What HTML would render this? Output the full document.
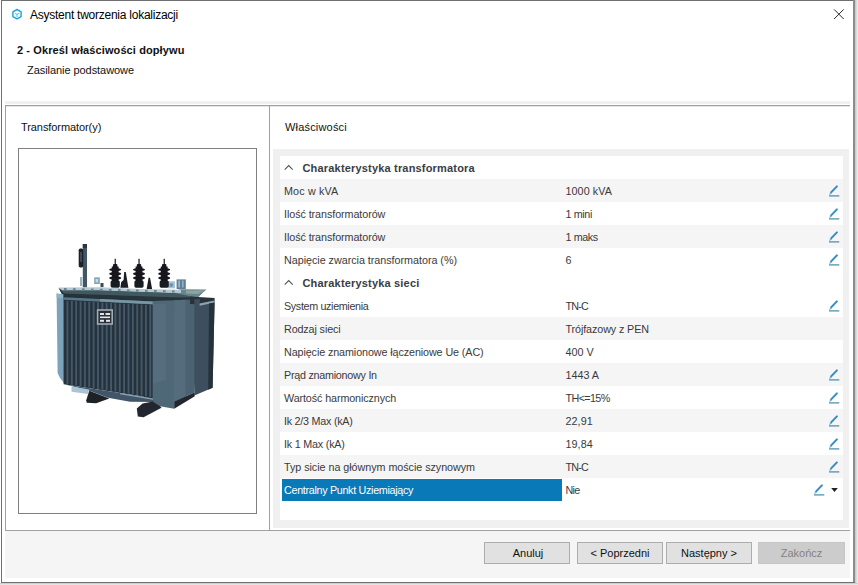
<!DOCTYPE html>
<html>
<head>
<meta charset="utf-8">
<title>Asystent tworzenia lokalizacji</title>
<style>
html,body{margin:0;padding:0;}
body{width:858px;height:585px;position:relative;overflow:hidden;background:#fff;font-family:"Liberation Sans",sans-serif;font-size:11px;color:#1e1e1e;}
.abs{position:absolute;}
.t{position:absolute;white-space:nowrap;line-height:14px;height:14px;}
.row{position:absolute;left:280px;width:563px;height:23px;}
.row.g{background:#f5f5f5;}
.row .l{position:absolute;left:4px;top:5px;line-height:14px;white-space:nowrap;color:#3a3a3a;font-size:10.75px;}
.row .v{position:absolute;left:285.5px;top:5px;line-height:14px;white-space:nowrap;color:#3a3a3a;font-size:10.75px;}
.row .h{position:absolute;left:22.5px;top:5px;line-height:14px;white-space:nowrap;font-weight:bold;color:#3a3d42;letter-spacing:0.18px;}
.row svg.p{position:absolute;left:547px;top:5px;}
.row svg.c{position:absolute;left:4px;top:8px;}
.btn{position:absolute;top:542px;height:20px;border:1px solid #adadad;background:#e1e1e1;text-align:center;line-height:20px;color:#111;box-sizing:content-box;}
</style>
</head>
<body>
<!-- window frame -->
<div class="abs" style="left:1px;top:0;width:853px;height:1px;background:#707070;"></div>
<div class="abs" style="left:1px;top:0;width:1px;height:583px;background:#707070;"></div>
<div class="abs" style="left:853px;top:0;width:2px;height:583px;background:#8c8c8c;"></div>
<div class="abs" style="left:855px;top:0;width:3px;height:585px;background:linear-gradient(90deg,#c4c4c4,#f2f2f2);"></div>
<div class="abs" style="left:1px;top:582px;width:854px;height:1px;background:#707070;"></div>
<div class="abs" style="left:0px;top:583px;width:858px;height:2px;background:linear-gradient(180deg,#c4c4c4,#efefef);"></div>

<!-- title bar -->
<svg class="abs" style="left:10px;top:7px;" width="14" height="15" viewBox="0 0 14 15">
  <path d="M7 2.5 L11.1 4.85 L11.1 9.55 L7 11.9 L2.9 9.55 L2.9 4.85 Z" fill="none" stroke="#1aa7e2" stroke-width="1.45" stroke-linejoin="round"/>
  <path d="M5.2 6.2 L7 7.4 L8.8 6.2 M7 7.4 L7 9.8" fill="none" stroke="#45b8ea" stroke-width="0.9" stroke-linecap="round"/>
</svg>
<div class="t" id="title" style="left:30px;top:8.4px;font-size:12px;color:#000;letter-spacing:-0.25px;">Asystent tworzenia lokalizacji</div>
<svg class="abs" style="left:833px;top:8px;" width="12" height="13" viewBox="0 0 12 13">
  <path d="M1.1 1.4 L10.7 11 M10.7 1.4 L1.1 11" stroke="#2a2a2a" stroke-width="1" fill="none"/>
</svg>

<!-- step header -->
<div class="t" id="h1" style="left:17px;top:43px;font-weight:bold;color:#111;letter-spacing:0.1px;">2 - Określ właściwości dopływu</div>
<div class="t" id="h2" style="left:27px;top:62.5px;color:#111;letter-spacing:-0.06px;">Zasilanie podstawowe</div>

<!-- separator -->
<div class="abs" style="left:5px;top:101px;width:845px;height:3px;background:#f1f1f1;"></div>
<div class="abs" style="left:5px;top:105px;width:845px;height:1px;background:#a0a0a0;"></div>
<div class="abs" style="left:6px;top:106px;width:844px;height:1px;background:#e6e6e6;"></div>
<div class="abs" style="left:5px;top:105px;width:1px;height:426px;background:#a0a0a0;"></div>
<div class="abs" style="left:269px;top:105px;width:1px;height:426px;background:#a0a0a0;"></div>

<!-- left panel -->
<div class="t" id="lp" style="left:21px;top:120px;color:#111;letter-spacing:-0.08px;">Transformator(y)</div>
<div class="abs" style="left:18px;top:148px;width:237px;height:364px;border:1px solid #7f7f7f;background:#fff;"></div>

<!-- TRANSFORMER START -->
<svg class="abs" style="left:19px;top:149px;" width="237" height="364" viewBox="19 149 237 364">
<defs><filter id="bl" x="-5%" y="-5%" width="110%" height="110%"><feGaussianBlur stdDeviation="0.45"/></filter>
<linearGradient id="side" x1="0" x2="1" y1="0" y2="0"><stop offset="0" stop-color="#5b7483"/><stop offset="0.45" stop-color="#56707f"/><stop offset="0.5" stop-color="#4a6070"/><stop offset="1" stop-color="#4d6575"/></linearGradient>
<linearGradient id="finv" x1="0" x2="0" y1="0" y2="1"><stop offset="0" stop-color="#2b3942"/><stop offset="1" stop-color="#313f4a"/></linearGradient>
</defs>
<g filter="url(#bl)">
<rect x="82.8" y="244" width="4.2" height="43.5" fill="#435668"/><rect x="82.8" y="244" width="4.2" height="4" fill="#2b3641"/>
<rect x="78.7" y="248.6" width="4.6" height="18.8" rx="1.6" fill="#1b2129"/>
<rect x="80.3" y="252" width="1.4" height="10" fill="#4a5a68"/>
<rect x="80" y="277" width="2.2" height="9" fill="#9ab4c2"/>
<rect x="94.2" y="277.4" width="5.6" height="6.6" fill="#7fa3b8"/><rect x="95.6" y="279" width="2.6" height="3.4" fill="#c4dae6"/>
<rect x="100.5" y="283" width="3" height="4" fill="#3b4a52"/>
<rect x="167.8" y="281.3" width="7.2" height="7" fill="#a3c4da"/><circle cx="171.3" cy="285" r="1.9" fill="#6f93aa"/>
<rect x="176.6" y="279.4" width="9.2" height="9.6" fill="#5f8096"/><rect x="178.4" y="280.5" width="1.4" height="7" fill="#a8c4d4"/><rect x="182" y="280.5" width="1.6" height="7" fill="#94b2c4"/>
<rect x="114.60000000000001" y="258.8" width="1.3" height="6" fill="#23272e"/><rect x="113.0" y="264" width="4.4" height="3.4" rx="1" fill="#16191f"/><rect x="111.8" y="266.5" width="6.8" height="21" fill="#15181e"/><ellipse cx="115.2" cy="269.6" rx="6" ry="1.7" fill="#14171c"/><ellipse cx="115.2" cy="273.8" rx="6" ry="1.7" fill="#14171c"/><ellipse cx="115.2" cy="278" rx="6" ry="1.7" fill="#14171c"/><rect x="110.60000000000001" y="280.5" width="9.2" height="7" rx="1.5" fill="#171b21"/>
<rect x="138.4" y="258.8" width="1.3" height="6" fill="#23272e"/><rect x="136.8" y="264" width="4.4" height="3.4" rx="1" fill="#16191f"/><rect x="135.6" y="266.5" width="6.8" height="21" fill="#15181e"/><ellipse cx="139" cy="269.6" rx="6" ry="1.7" fill="#14171c"/><ellipse cx="139" cy="273.8" rx="6" ry="1.7" fill="#14171c"/><ellipse cx="139" cy="278" rx="6" ry="1.7" fill="#14171c"/><rect x="134.4" y="280.5" width="9.2" height="7" rx="1.5" fill="#171b21"/>
<rect x="163.6" y="258.8" width="1.3" height="6" fill="#23272e"/><rect x="162.0" y="264" width="4.4" height="3.4" rx="1" fill="#16191f"/><rect x="160.79999999999998" y="266.5" width="6.8" height="21" fill="#15181e"/><ellipse cx="164.2" cy="269.6" rx="6" ry="1.7" fill="#14171c"/><ellipse cx="164.2" cy="273.8" rx="6" ry="1.7" fill="#14171c"/><ellipse cx="164.2" cy="278" rx="6" ry="1.7" fill="#14171c"/><rect x="159.6" y="280.5" width="9.2" height="7" rx="1.5" fill="#171b21"/>
<path d="M124.2 272 L125.8 272 L128.4 287.8 L120.4 287.8 L121.2 282 L123.6 280 Z" fill="#1a1e25"/>
<path d="M148.6 277.8 L150 277.8 L152.2 289.3 L146.6 289.3 Z" fill="#1a1e25"/>
<path d="M180 289.2 L206.6 289.6 L203 292.5 L197 298.5 L172 297.5 L172 292 Z" fill="#6b8585"/>
<path d="M186 290.5 L205 290.3 L198 294 L186 293.5 Z" fill="#8aa3a6"/>
<path d="M58.4 287.8 L62 290 L172 293.5 L197 298.3 L214 298.5 L214 301 L153 301.5 L70 297.5 L62 294.5 Z" fill="#26343b"/><path d="M59.5 288.6 L172 292.6 L197 297.6 L172 297.2 L64 293.6 Z" fill="#42585f"/>
<path d="M58.4 287.6 L100 287.3 L140 289 L181 289.8 L181 293 L140 291.8 L100 290.2 L62 290.3 Z" fill="#b4c9d3"/>
<rect x="64" y="288.0" width="2.6" height="2" fill="#6d838d"/>
<rect x="73" y="288.2" width="2.6" height="2" fill="#6d838d"/>
<rect x="82" y="288.4" width="2.6" height="2" fill="#6d838d"/>
<rect x="91" y="288.6" width="2.6" height="2" fill="#6d838d"/>
<rect x="100" y="288.8" width="2.6" height="2" fill="#6d838d"/>
<rect x="109" y="289.0" width="2.6" height="2" fill="#6d838d"/>
<rect x="118" y="289.2" width="2.6" height="2" fill="#6d838d"/>
<rect x="127" y="289.4" width="2.6" height="2" fill="#6d838d"/>
<rect x="136" y="289.6" width="2.6" height="2" fill="#6d838d"/>
<rect x="145" y="289.8" width="2.6" height="2" fill="#6d838d"/>
<rect x="154" y="290.0" width="2.6" height="2" fill="#6d838d"/>
<rect x="163" y="290.2" width="2.6" height="2" fill="#6d838d"/>
<rect x="172" y="290.4" width="2.6" height="2" fill="#6d838d"/>
<path d="M56.6 293.6 L63.6 294.5 L64 383 L60 378 L57.6 373 Z" fill="#7ba3ba"/>
<path d="M56.6 293.6 L63.6 294.5 L63.6 298.6 L56.7 297.5 Z" fill="#8fb2c4"/>
<path d="M63.4 294.2 L75 296 L153 301 L153 399 L140 396 L63.6 384.2 Z" fill="#25313a"/>
<path d="M63.4 297.3 L153 301.4 L153 304.4 L63.4 299.8 Z" fill="#587887"/>
<path d="M100 299 L153 301.4 L153 304.2 L100 301.6 Z" fill="#7a96a3"/>
<rect x="66.50" y="300.8" width="1.9" height="83.4" fill="#44596a"/>
<rect x="70.86" y="301.0" width="1.9" height="83.8" fill="#44596a"/>
<rect x="75.22" y="301.2" width="1.9" height="84.3" fill="#44596a"/>
<rect x="79.58" y="301.4" width="1.9" height="84.7" fill="#44596a"/>
<rect x="83.94" y="301.7" width="1.9" height="85.2" fill="#44596a"/>
<rect x="88.30" y="301.9" width="1.9" height="85.6" fill="#44596a"/>
<rect x="92.66" y="302.1" width="1.9" height="86.1" fill="#44596a"/>
<rect x="97.02" y="302.3" width="1.9" height="86.5" fill="#44596a"/>
<rect x="101.38" y="302.6" width="1.9" height="87.0" fill="#44596a"/>
<rect x="105.74" y="302.8" width="1.9" height="87.4" fill="#44596a"/>
<rect x="110.10" y="303.0" width="1.9" height="87.9" fill="#44596a"/>
<rect x="114.46" y="303.3" width="1.9" height="88.3" fill="#44596a"/>
<rect x="118.82" y="303.5" width="1.9" height="88.8" fill="#44596a"/>
<rect x="123.18" y="303.7" width="1.9" height="89.2" fill="#44596a"/>
<rect x="127.54" y="303.9" width="1.9" height="89.7" fill="#44596a"/>
<rect x="131.90" y="304.2" width="1.9" height="90.1" fill="#44596a"/>
<rect x="136.26" y="304.4" width="1.9" height="90.6" fill="#44596a"/>
<rect x="140.62" y="304.6" width="1.9" height="91.0" fill="#44596a"/>
<rect x="144.98" y="304.8" width="1.9" height="91.5" fill="#44596a"/>
<rect x="149.34" y="305.1" width="1.9" height="91.9" fill="#44596a"/>
<rect x="96.8" y="309.2" width="16.2" height="15.6" fill="#a2adb5"/><rect x="98.4" y="310.8" width="13" height="12.4" fill="#2a2f36"/>
<rect x="100" y="313" width="4" height="2" fill="#dfe6ea"/><rect x="105.5" y="313" width="4.6" height="2" fill="#dfe6ea"/><rect x="100" y="316.5" width="10" height="1.6" fill="#dfe6ea"/><rect x="100" y="319.8" width="4" height="2" fill="#dfe6ea"/><rect x="106" y="319.8" width="4" height="2" fill="#dfe6ea"/>
<path d="M152.6 301 L175 300.2 L174.2 408.8 L160 406.2 L152.6 401.8 Z" fill="#4f6777"/>
<path d="M174.2 300.2 L200 299 L194.4 392.6 L174.2 401.6 Z" fill="#4b6272"/><path d="M174.2 300.2 L185.5 299.8 L185.5 396.6 L174.2 401.6 Z" fill="#546c7c"/>
<path d="M153 304 L166 303.6 L166 380 L153 384 Z" fill="#5a7484" opacity="0.5"/>
<path d="M190 296.5 L214.6 298 L214.6 301.4 L199.6 304.6 L190 304 Z" fill="#29333b"/><path d="M194.4 299.2 L200 299 L199.6 303.4 L214.6 300.4 L212.6 387.8 L194.4 395.4 Z" fill="#3d505e"/>
<path d="M199.6 303.4 L214.6 300.4 L214.6 302.6 L199.6 305.8 Z" fill="#8ea4af"/>
<path d="M209 303.4 L214.6 302.4 L212.6 387.8 L208.2 389.8 Z" fill="#27313a"/>
<path d="M65.2 384.4 L140 396 L153 398.6 L153 402 L130 401.8 L108 397.8 L89 390.6 Z" fill="#42576a"/>
<path d="M120 393 L153 398.6 L153 399.8 L120 394.2 Z" fill="#8aa5b2"/>
<path d="M71.5 386.4 L89 389.6 L88 394 L71.5 391.8 Z" fill="#a9c4d6"/>
<path d="M89.3 390.7 L109.3 398.6 L96.2 403.3 L86.7 402.8 L86.2 400.2 Z" fill="#1d2228"/>
<path d="M136.8 408.6 L142.6 403.4 L152.8 401.6 L160 406 L161.5 407.8 L143.6 417.2 L137.8 416.4 Z" fill="#22272d"/><path d="M174.2 401.5 L194.4 392.6 L194.8 396.2 L174.2 408.8 Z" fill="#22272d"/>
</g></svg>
<!-- TRANSFORMER END -->

<!-- right panel -->
<div class="t" id="rp" style="left:285px;top:120px;color:#111;letter-spacing:0.18px;">Właściwości</div>
<div class="abs" style="left:273px;top:149px;width:576px;height:379px;background:#f0f0f0;"></div>
<div class="abs" style="left:280px;top:156px;width:563px;height:364px;background:#fff;"></div>

<!-- ROWS -->
<div class="row" style="top:156px;"><svg class="c" width="10" height="7" viewBox="0 0 10 7"><path d="M0.7 5.6 L4.7 1.6 L8.7 5.6" stroke="#555" stroke-width="1.1" fill="none"/></svg><span class="h">Charakterystyka transformatora</span></div>
<div class="row g" style="top:179px;"><span class="l" style="letter-spacing:0.163px;">Moc w kVA</span><span class="v" style="letter-spacing:0.071px;">1000 kVA</span><svg class="p" width="14" height="14" viewBox="0 0 14 14"><path d="M4.1 8.4 L9.9 2.4" stroke="#348dc4" stroke-width="2.05" fill="none" stroke-linecap="round"/><path d="M3.1 7.9 L5 9.6 L2.2 11.3 Z" fill="#6fb4dc"/><path d="M2 11.9 L12.3 11.9" stroke="#4487ab" stroke-width="1.2" fill="none"/></svg></div>
<div class="row" style="top:202px;"><span class="l" style="letter-spacing:-0.070px;">Ilość transformatorów</span><span class="v" style="letter-spacing:-0.360px;">1 mini</span><svg class="p" width="14" height="14" viewBox="0 0 14 14"><path d="M4.1 8.4 L9.9 2.4" stroke="#348dc4" stroke-width="2.05" fill="none" stroke-linecap="round"/><path d="M3.1 7.9 L5 9.6 L2.2 11.3 Z" fill="#6fb4dc"/><path d="M2 11.9 L12.3 11.9" stroke="#4487ab" stroke-width="1.2" fill="none"/></svg></div>
<div class="row g" style="top:225px;"><span class="l" style="letter-spacing:-0.070px;">Ilość transformatorów</span><span class="v" style="letter-spacing:-0.400px;">1 maks</span><svg class="p" width="14" height="14" viewBox="0 0 14 14"><path d="M4.1 8.4 L9.9 2.4" stroke="#348dc4" stroke-width="2.05" fill="none" stroke-linecap="round"/><path d="M3.1 7.9 L5 9.6 L2.2 11.3 Z" fill="#6fb4dc"/><path d="M2 11.9 L12.3 11.9" stroke="#4487ab" stroke-width="1.2" fill="none"/></svg></div>
<div class="row" style="top:248px;"><span class="l" style="letter-spacing:-0.024px;">Napięcie zwarcia transformatora (%)</span><span class="v" style="letter-spacing:0.000px;">6</span><svg class="p" width="14" height="14" viewBox="0 0 14 14"><path d="M4.1 8.4 L9.9 2.4" stroke="#348dc4" stroke-width="2.05" fill="none" stroke-linecap="round"/><path d="M3.1 7.9 L5 9.6 L2.2 11.3 Z" fill="#6fb4dc"/><path d="M2 11.9 L12.3 11.9" stroke="#4487ab" stroke-width="1.2" fill="none"/></svg></div>
<div class="row" style="top:271px;"><svg class="c" width="10" height="7" viewBox="0 0 10 7"><path d="M0.7 5.6 L4.7 1.6 L8.7 5.6" stroke="#555" stroke-width="1.1" fill="none"/></svg><span class="h">Charakterystyka sieci</span></div>
<div class="row" style="top:294px;"><span class="l" style="letter-spacing:-0.344px;">System uziemienia</span><span class="v" style="letter-spacing:-0.833px;">TN-C</span><svg class="p" width="14" height="14" viewBox="0 0 14 14"><path d="M4.1 8.4 L9.9 2.4" stroke="#348dc4" stroke-width="2.05" fill="none" stroke-linecap="round"/><path d="M3.1 7.9 L5 9.6 L2.2 11.3 Z" fill="#6fb4dc"/><path d="M2 11.9 L12.3 11.9" stroke="#4487ab" stroke-width="1.2" fill="none"/></svg></div>
<div class="row g" style="top:317px;"><span class="l" style="letter-spacing:-0.118px;">Rodzaj sieci</span><span class="v" style="letter-spacing:-0.100px;">Trójfazowy z PEN</span></div>
<div class="row" style="top:340px;"><span class="l" style="letter-spacing:-0.095px;">Napięcie znamionowe łączeniowe Ue (AC)</span><span class="v" style="letter-spacing:0.000px;">400 V</span></div>
<div class="row g" style="top:363px;"><span class="l" style="letter-spacing:-0.253px;">Prąd znamionowy In</span><span class="v" style="letter-spacing:0.000px;">1443 A</span><svg class="p" width="14" height="14" viewBox="0 0 14 14"><path d="M4.1 8.4 L9.9 2.4" stroke="#348dc4" stroke-width="2.05" fill="none" stroke-linecap="round"/><path d="M3.1 7.9 L5 9.6 L2.2 11.3 Z" fill="#6fb4dc"/><path d="M2 11.9 L12.3 11.9" stroke="#4487ab" stroke-width="1.2" fill="none"/></svg></div>
<div class="row" style="top:386px;"><span class="l" style="letter-spacing:-0.105px;">Wartość harmonicznych</span><span class="v" style="letter-spacing:-0.600px;">TH&lt;=15%</span><svg class="p" width="14" height="14" viewBox="0 0 14 14"><path d="M4.1 8.4 L9.9 2.4" stroke="#348dc4" stroke-width="2.05" fill="none" stroke-linecap="round"/><path d="M3.1 7.9 L5 9.6 L2.2 11.3 Z" fill="#6fb4dc"/><path d="M2 11.9 L12.3 11.9" stroke="#4487ab" stroke-width="1.2" fill="none"/></svg></div>
<div class="row g" style="top:409px;"><span class="l" style="letter-spacing:-0.243px;">Ik 2/3 Max (kA)</span><span class="v" style="letter-spacing:0.075px;">22,91</span><svg class="p" width="14" height="14" viewBox="0 0 14 14"><path d="M4.1 8.4 L9.9 2.4" stroke="#348dc4" stroke-width="2.05" fill="none" stroke-linecap="round"/><path d="M3.1 7.9 L5 9.6 L2.2 11.3 Z" fill="#6fb4dc"/><path d="M2 11.9 L12.3 11.9" stroke="#4487ab" stroke-width="1.2" fill="none"/></svg></div>
<div class="row" style="top:432px;"><span class="l" style="letter-spacing:-0.200px;">Ik 1 Max (kA)</span><span class="v" style="letter-spacing:0.075px;">19,84</span><svg class="p" width="14" height="14" viewBox="0 0 14 14"><path d="M4.1 8.4 L9.9 2.4" stroke="#348dc4" stroke-width="2.05" fill="none" stroke-linecap="round"/><path d="M3.1 7.9 L5 9.6 L2.2 11.3 Z" fill="#6fb4dc"/><path d="M2 11.9 L12.3 11.9" stroke="#4487ab" stroke-width="1.2" fill="none"/></svg></div>
<div class="row g" style="top:455px;"><span class="l" style="letter-spacing:-0.037px;">Typ sicie na głównym moście szynowym</span><span class="v" style="letter-spacing:-0.833px;">TN-C</span><svg class="p" width="14" height="14" viewBox="0 0 14 14"><path d="M4.1 8.4 L9.9 2.4" stroke="#348dc4" stroke-width="2.05" fill="none" stroke-linecap="round"/><path d="M3.1 7.9 L5 9.6 L2.2 11.3 Z" fill="#6fb4dc"/><path d="M2 11.9 L12.3 11.9" stroke="#4487ab" stroke-width="1.2" fill="none"/></svg></div>
<div class="row" style="top:478px;"><div class="abs" style="left:2px;top:1px;width:280px;height:22px;background:#0a79b7;"></div><span class="l" style="color:#fff;letter-spacing:-0.308px;">Centralny Punkt Uziemiający</span><span class="v" style="letter-spacing:-0.650px;">Nie</span><svg class="p" style="left:531.6px;" width="14" height="14" viewBox="0 0 14 14"><path d="M4.1 8.4 L9.9 2.4" stroke="#348dc4" stroke-width="2.05" fill="none" stroke-linecap="round"/><path d="M3.1 7.9 L5 9.6 L2.2 11.3 Z" fill="#6fb4dc"/><path d="M2 11.9 L12.3 11.9" stroke="#4487ab" stroke-width="1.2" fill="none"/></svg><svg class="abs" style="left:551.4px;top:10px;" width="7" height="5" viewBox="0 0 7 5"><path d="M0.2 0.1 L6.8 0.1 L3.5 3.9 Z" fill="#222"/></svg></div>

<!-- footer -->
<div class="abs" style="left:5px;top:530px;width:845px;height:1px;background:#a0a0a0;"></div>
<div class="abs" style="left:5px;top:531px;width:845px;height:47px;background:#f5f5f5;"></div>
<div class="btn" style="left:484px;width:84px;text-indent:2px;">Anuluj</div>
<div class="btn" style="left:577px;width:84px;">&lt; Poprzedni</div>
<div class="btn" style="left:666px;width:84px;">Następny &gt;</div>
<div class="btn" style="left:758px;width:85px;background:#cccccc;border-color:#c6c6c6;color:#838383;">Zakończ</div>
</body>
</html>
